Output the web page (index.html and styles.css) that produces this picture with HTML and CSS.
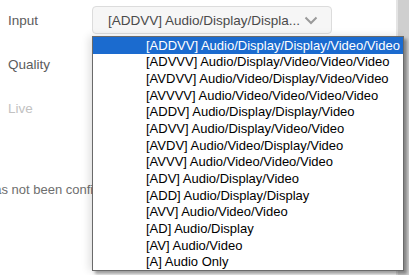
FILE: index.html
```html
<!DOCTYPE html>
<html lang="en">
<head>
<meta charset="UTF-8" />
<meta name="viewport" content="width=device-width, initial-scale=1.0" />
<title>Input settings</title>
<link rel="stylesheet" href="styles.css">
</head>
<body>
<div class="page">
  <main class="form">
    <!-- Input row ------------------------------------------------ -->
    <div class="row">
      <label class="label">Input</label>
      <div class="select">
        <span class="select-text">[ADDVV] Audio/Display/Displa...</span>
        <svg class="chev" width="14" height="9" viewBox="0 0 14 9"><polyline points="1.5,1.5 7,7 12.5,1.5" fill="none" stroke="#9a9a9a" stroke-width="2"/></svg>
      </div>
    </div>

    <!-- Quality row ---------------------------------------------- -->
    <div class="row">
      <label class="label">Quality</label>
    </div>

    <!-- Live row ------------------------------------------------- -->
    <div class="row">
      <label class="label disabled">Live</label>
    </div>

    <p class="message">has not been configured</p>

    <!-- Open dropdown ------------------------------------------- -->
    <ul class="options">
      <li class="selected">[ADDVV] Audio/Display/Display/Video/Video</li>
      <li>[ADVVV] Audio/Display/Video/Video/Video</li>
      <li>[AVDVV] Audio/Video/Display/Video/Video</li>
      <li>[AVVVV] Audio/Video/Video/Video/Video</li>
      <li>[ADDV] Audio/Display/Display/Video</li>
      <li>[ADVV] Audio/Display/Video/Video</li>
      <li>[AVDV] Audio/Video/Display/Video</li>
      <li>[AVVV] Audio/Video/Video/Video</li>
      <li>[ADV] Audio/Display/Video</li>
      <li>[ADD] Audio/Display/Display</li>
      <li>[AVV] Audio/Video/Video</li>
      <li>[AD] Audio/Display</li>
      <li>[AV] Audio/Video</li>
      <li>[A] Audio Only</li>
    </ul>
  </main>
  <div class="strip"></div>
</div>
</body>
</html>
```

FILE: styles.css
```css
:root {
  --text: #5c5c5c;
  --muted: #c2c2c2;
  --highlight: #1b6bcf;
}
* { box-sizing: border-box; margin: 0; padding: 0; }
html, body { height: 100%; background: #fff; font-family: "Liberation Sans", Arial, sans-serif; font-size: 13px; color: var(--text); }

.page { display: flex; height: 100%; overflow: hidden; }

/* --------------------  Form  ---------------------- */
.form { flex: 1; position: relative; padding: 6px 0 0 8px; }
.row { display: flex; align-items: center; height: 28px; margin-bottom: 16px; }
.label { width: 84px; font-size: 13.5px; }
.label.disabled { color: var(--muted); }

.select { width: 240px; height: 28px; display: flex; align-items: center; gap: 4px; padding: 0 0 0 15px; background: #f6f6f6; border: 1px solid #dcdcdc; border-radius: 4px; color: #4a4a4a; font-size: 13.5px; }
.chev { margin-top: 1px; }

.message { margin: 60px 0 0 -21px; line-height: 16px; color: #6e6e6e; white-space: nowrap; }

/* --------------------  Dropdown  ------------------ */
.options { position: absolute; left: 92px; top: 36px; width: 312px; height: 235px; display: flex; flex-direction: column; list-style: none; background: #fff; border: 1px solid #6a6a6a; box-shadow: 3px 3px 3px rgba(0,0,0,.35), -3px 0 8px rgba(0,0,0,.12); font-family: "Liberation Sans", Arial, sans-serif; font-size: 13px; color: #000; }
.options li { flex: 1; display: flex; align-items: center; padding-left: 53px; white-space: nowrap; }
.options li.selected { background: var(--highlight); color: #fff; }

/* --------------------  Right strip  --------------- */
.strip { width: 13px; background: #cfcfcf; border-left: 2px solid #e4e4e4; }
```
